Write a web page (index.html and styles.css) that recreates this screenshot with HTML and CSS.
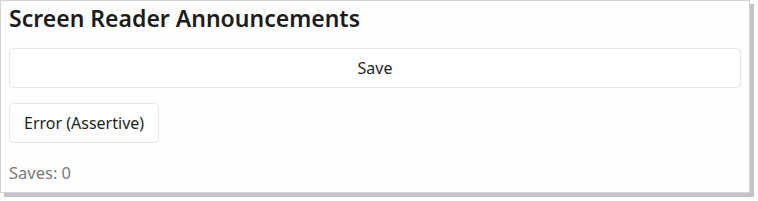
FILE: index.html
```html
<!DOCTYPE html>
<html>
<head>
<meta charset="utf-8">
<link rel="stylesheet" href="styles.css">
</head>
<body>
<div class="window">
  <h1 class="title">Screen Reader Announcements</h1>
  <button class="btn btn-wide" type="button">Save</button>
  <div class="row">
    <button class="btn" type="button">Error (Assertive)</button>
  </div>
  <div class="status">Saves: 0</div>
</div>
</body>
</html>
```
FILE: styles.css
```css
html, body {
  margin: 0;
  padding: 0;
  background: #ffffff;
}
body {
  font-family: "Noto Sans", "Open Sans", sans-serif;
  color: #1a1a1a;
  min-height: 201px;
  padding-bottom: 8px;
  box-sizing: border-box;
}
.window {
  box-sizing: border-box;
  width: 750px;
  height: 193px;
  border: 1px solid #d3d3da;
  background: #fefefe;
  box-shadow: 4px 4px 0 #c4c4c8;
  padding: 0 8px;
  display: flex;
  flex-direction: column;
}
.title {
  margin: 2px 0 0;
  font-size: 23px;
  font-weight: 600;
  line-height: 31px;
  color: #1c1c1c;
}
.btn {
  font-family: inherit;
  font-size: 16px;
  color: #1e1e1e;
  background: #ffffff;
  border: 1px solid #e4e4e4;
  border-radius: 5px;
  height: 40px;
  padding: 0 14px;
  cursor: pointer;
}
.btn-wide {
  margin-top: 14px;
  width: 100%;
}
.row {
  margin-top: 15px;
  display: flex;
}
.status {
  margin-top: 18px;
  font-size: 16.5px;
  color: #7a7a7a;
}
```
